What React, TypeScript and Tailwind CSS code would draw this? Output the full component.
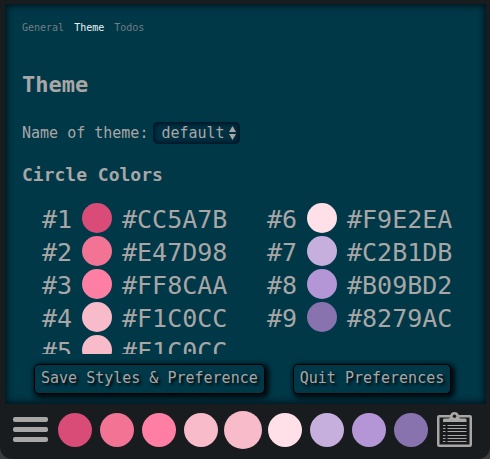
import { useState } from "react";

interface Swatch {
  hex: string;
  fill: string;
}

const swatches: Swatch[] = [
  { hex: "#CC5A7B", fill: "bg-[#da4c78]" },
  { hex: "#E47D98", fill: "bg-[#f27394]" },
  { hex: "#FF8CAA", fill: "bg-[#ff7fa4]" },
  { hex: "#F1C0CC", fill: "bg-[#f8bbca]" },
  { hex: "#F1C0CC", fill: "bg-[#f8bbca]" },
  { hex: "#F9E2EA", fill: "bg-[#ffe0e9]" },
  { hex: "#C2B1DB", fill: "bg-[#c6aedd]" },
  { hex: "#B09BD2", fill: "bg-[#b495d6]" },
  { hex: "#8279AC", fill: "bg-[#8873af]" },
];

const tabs = ["General", "Theme", "Todos"];

const actionClass =
  "h-[30px] rounded-[5px] border border-black bg-[#003848] px-[6px] pb-[2px] text-[15px] leading-[20px] whitespace-nowrap shadow-[2px_2px_5px_2px_#000a0e] [text-shadow:2px_2px_3px_#000]";

function ClipboardIcon() {
  return (
    <svg viewBox="0 0 35 35" className="size-[35px]" fill="none" aria-hidden="true">
      <rect x="1.25" y="4.25" width="32.5" height="29.5" rx="1" stroke="#a9a6a6" strokeWidth="2.5" />
      <path
        d="M6 10V7.5Q6 6.5 8 6.5H11.5Q13 6.3 13 4.5Q13.3 0 17.5 0T22 4.5Q22 6.3 23.5 6.5H27.5Q29.5 6.5 29.5 7.5V10Z"
        fill="#a9a6a6"
      />
      <circle cx="17.5" cy="4.3" r="1.7" fill="#191c1f" />
      <path
        d="M10.5 13.5h19M10.5 16.5h19M10.5 19.5h19M10.5 23.5h19M10.5 26.5h19M10.5 29.5h19"
        stroke="#a9a6a6"
        strokeWidth="1.1"
      />
      <path
        d="M6 13.5h2.5M6 16.5h2.5M6 19.5h2.5M6 23.5h2.5M6 26.5h2.5M6 29.5h2.5"
        stroke="#a9a6a6"
        strokeWidth="1.1"
      />
    </svg>
  );
}

export default function App() {
  const [tab, setTab] = useState("Theme");
  const [active, setActive] = useState(4);

  return (
    <div className="h-screen bg-[#3b3c3e] font-['DejaVu_Sans_Mono',monospace] text-[#a9a6a6]">
      <div className="flex h-full flex-col rounded-b-[12px] bg-[#191c1f] pt-1">
        <main className="mr-1 ml-[5px] flex min-h-0 flex-1 flex-col bg-[#003848] px-[17px] pb-[10px] shadow-[inset_0_0_6px_2px_#00141b]">
          <nav className="flex gap-[10px] pt-4 text-[10px] leading-[15px]">
            {tabs.map((name) => (
              <button
                key={name}
                onClick={() => setTab(name)}
                className={name === tab ? "text-[#e8f1f3]" : "text-[#727e82]"}
              >
                {name}
              </button>
            ))}
          </nav>

          <h1 className="mt-9 text-[22px] leading-[28px] font-bold">Theme</h1>

          <div className="mt-[22px] flex items-center gap-[5px] text-[15px] leading-[24px]">
            <label htmlFor="theme-name" className="whitespace-nowrap">
              Name of theme:
            </label>
            <div className="relative">
              <select
                id="theme-name"
                className="block h-[22px] w-[87px] appearance-none rounded-[5px] bg-[#003143] pl-2 text-[15px] leading-[22px] shadow-[inset_0_0_4px_2px_#001425]"
              >
                <option>default</option>
              </select>
              <svg
                viewBox="0 0 7 14"
                className="pointer-events-none absolute top-1 right-1 h-[14px] w-[7px]"
                fill="#a9a6a6"
                aria-hidden="true"
              >
                <path d="M3.5 0 7 6H0ZM3.5 14 0 8h7Z" />
              </svg>
            </div>
          </div>

          <h2 className="mt-[18px] text-[18px] leading-[24px] font-bold">Circle Colors</h2>

          <ol className="mt-4 grid min-h-0 flex-1 auto-cols-max grid-flow-col grid-rows-[repeat(5,33px)] gap-x-10 overflow-hidden pl-5 text-[25px] leading-[33px]">
            {swatches.map(({ hex, fill }, i) => (
              <li key={i} className="flex items-start gap-[10px]">
                <span className="w-[30px]">#{i + 1}</span>
                <span className={`size-[30px] rounded-full ${fill}`} />
                <span className="w-[105px]">{hex}</span>
              </li>
            ))}
          </ol>

          <div className="mt-[10px] flex gap-[28px] pl-3">
            <button className={actionClass}>Save Styles &amp; Preference</button>
            <button className={actionClass}>Quit Preferences</button>
          </div>
        </main>

        <footer className="flex h-[55px] shrink-0 items-center justify-between pr-[18px] pb-1 pl-[13px]">
          <button aria-label="Menu" className="flex w-[35px] flex-col gap-[5px]">
            <span className="h-[5px] w-full rounded-[2px] bg-[#a9a6a6]" />
            <span className="h-[5px] w-full rounded-[2px] bg-[#a9a6a6]" />
            <span className="h-[5px] w-full rounded-[2px] bg-[#a9a6a6]" />
          </button>
          <div className="flex items-center gap-2">
            {swatches.map(({ hex, fill }, i) => (
              <button
                key={i}
                aria-label={`Color ${i + 1} ${hex}`}
                onClick={() => setActive(i)}
                className={`rounded-full ${fill} ${i === active ? "-mx-[2px] size-[38px]" : "size-[34px]"}`}
              />
            ))}
          </div>
          <button aria-label="Todos">
            <ClipboardIcon />
          </button>
        </footer>
      </div>
    </div>
  );
}
